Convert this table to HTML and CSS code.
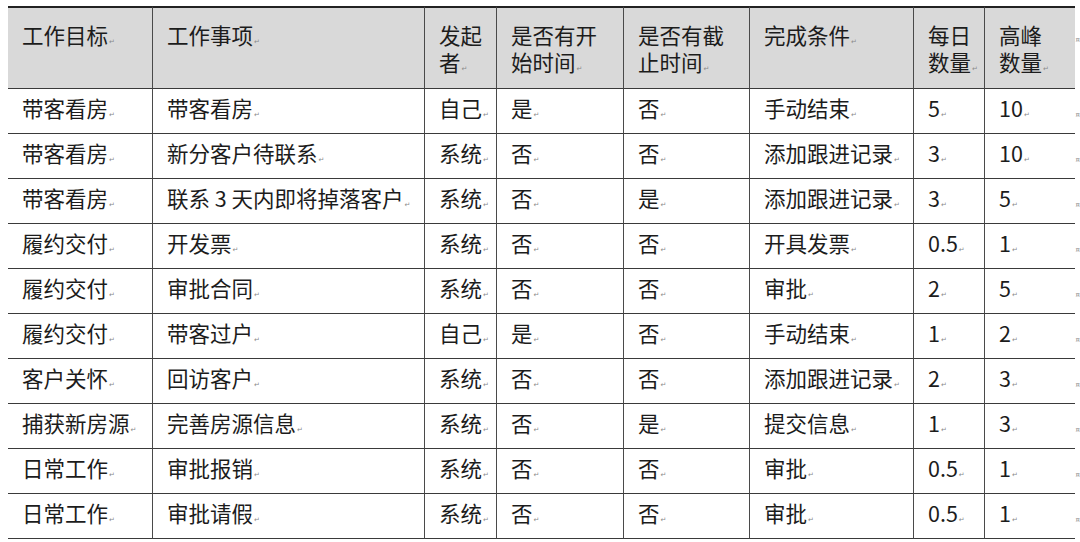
FILE: index.html
```html
<!DOCTYPE html>
<html lang="zh-CN">
<head>
<meta charset="utf-8">
<title>工作事项表</title>
<link rel="stylesheet" href="styles.css">
</head>
<body>
<table class="tbl">
  <colgroup>
    <col class="c1"><col class="c2"><col class="c3"><col class="c4"><col class="c5"><col class="c6"><col class="c7"><col class="c8"><col class="cend">
  </colgroup>
  <thead>
    <tr>
      <th>工作目标<span class="pm">↵</span></th>
      <th>工作事项<span class="pm">↵</span></th>
      <th>发起<br>者<span class="pm">↵</span></th>
      <th>是否有开<br>始时间<span class="pm">↵</span></th>
      <th>是否有截<br>止时间<span class="pm">↵</span></th>
      <th>完成条件<span class="pm">↵</span></th>
      <th>每日<br>数量<span class="pm">↵</span></th>
      <th>高峰<br>数量<span class="pm">↵</span></th>
      <th class="end"><span class="rm">¤</span></th>
    </tr>
  </thead>
  <tbody>
    <tr><td>带客看房<span class="pm">↵</span></td><td>带客看房<span class="pm">↵</span></td><td>自己<span class="pm">↵</span></td><td>是<span class="pm">↵</span></td><td>否<span class="pm">↵</span></td><td>手动结束<span class="pm">↵</span></td><td>5<span class="pm">↵</span></td><td>10<span class="pm">↵</span></td><td class="end"><span class="rm">¤</span></td></tr>
    <tr><td>带客看房<span class="pm">↵</span></td><td>新分客户待联系<span class="pm">↵</span></td><td>系统<span class="pm">↵</span></td><td>否<span class="pm">↵</span></td><td>否<span class="pm">↵</span></td><td>添加跟进记录<span class="pm">↵</span></td><td>3<span class="pm">↵</span></td><td>10<span class="pm">↵</span></td><td class="end"><span class="rm">¤</span></td></tr>
    <tr><td>带客看房<span class="pm">↵</span></td><td>联系 3 天内即将掉落客户<span class="pm">↵</span></td><td>系统<span class="pm">↵</span></td><td>否<span class="pm">↵</span></td><td>是<span class="pm">↵</span></td><td>添加跟进记录<span class="pm">↵</span></td><td>3<span class="pm">↵</span></td><td>5<span class="pm">↵</span></td><td class="end"><span class="rm">¤</span></td></tr>
    <tr><td>履约交付<span class="pm">↵</span></td><td>开发票<span class="pm">↵</span></td><td>系统<span class="pm">↵</span></td><td>否<span class="pm">↵</span></td><td>否<span class="pm">↵</span></td><td>开具发票<span class="pm">↵</span></td><td>0.5<span class="pm">↵</span></td><td>1<span class="pm">↵</span></td><td class="end"><span class="rm">¤</span></td></tr>
    <tr><td>履约交付<span class="pm">↵</span></td><td>审批合同<span class="pm">↵</span></td><td>系统<span class="pm">↵</span></td><td>否<span class="pm">↵</span></td><td>否<span class="pm">↵</span></td><td>审批<span class="pm">↵</span></td><td>2<span class="pm">↵</span></td><td>5<span class="pm">↵</span></td><td class="end"><span class="rm">¤</span></td></tr>
    <tr><td>履约交付<span class="pm">↵</span></td><td>带客过户<span class="pm">↵</span></td><td>自己<span class="pm">↵</span></td><td>是<span class="pm">↵</span></td><td>否<span class="pm">↵</span></td><td>手动结束<span class="pm">↵</span></td><td>1<span class="pm">↵</span></td><td>2<span class="pm">↵</span></td><td class="end"><span class="rm">¤</span></td></tr>
    <tr><td>客户关怀<span class="pm">↵</span></td><td>回访客户<span class="pm">↵</span></td><td>系统<span class="pm">↵</span></td><td>否<span class="pm">↵</span></td><td>否<span class="pm">↵</span></td><td>添加跟进记录<span class="pm">↵</span></td><td>2<span class="pm">↵</span></td><td>3<span class="pm">↵</span></td><td class="end"><span class="rm">¤</span></td></tr>
    <tr><td>捕获新房源<span class="pm">↵</span></td><td>完善房源信息<span class="pm">↵</span></td><td>系统<span class="pm">↵</span></td><td>否<span class="pm">↵</span></td><td>是<span class="pm">↵</span></td><td>提交信息<span class="pm">↵</span></td><td>1<span class="pm">↵</span></td><td>3<span class="pm">↵</span></td><td class="end"><span class="rm">¤</span></td></tr>
    <tr><td>日常工作<span class="pm">↵</span></td><td>审批报销<span class="pm">↵</span></td><td>系统<span class="pm">↵</span></td><td>否<span class="pm">↵</span></td><td>否<span class="pm">↵</span></td><td>审批<span class="pm">↵</span></td><td>0.5<span class="pm">↵</span></td><td>1<span class="pm">↵</span></td><td class="end"><span class="rm">¤</span></td></tr>
    <tr><td>日常工作<span class="pm">↵</span></td><td>审批请假<span class="pm">↵</span></td><td>系统<span class="pm">↵</span></td><td>否<span class="pm">↵</span></td><td>否<span class="pm">↵</span></td><td>审批<span class="pm">↵</span></td><td>0.5<span class="pm">↵</span></td><td>1<span class="pm">↵</span></td><td class="end"><span class="rm">¤</span></td></tr>
  </tbody>
</table>
</body>
</html>
```

FILE: styles.css
```css
* { box-sizing: border-box; }
html, body { background: #ffffff; }
body {
  margin: 0;
  padding: 6px 0 0 8px;
  font-family: "Noto Sans CJK SC", "Noto Sans", sans-serif;
  color: #1c1c1c;
}
.tbl {
  border-collapse: separate;
  border-spacing: 0;
  table-layout: fixed;
  width: 1072px;
  font-size: 21.5px;
}
.c1 { width: 144px; }
.c2 { width: 272px; }
.c3 { width: 72px; }
.c4 { width: 127px; }
.c5 { width: 126px; }
.c6 { width: 164px; }
.c7 { width: 71px; }
.c8 { width: 91px; }
.cend { width: 5px; }

.tbl th, .tbl td {
  text-align: left;
  font-weight: 400;
  padding: 0 0 0 14px;
  border-bottom: 1px solid #3a3a3a;
  border-left: 1px solid #4a4a4a;
  white-space: nowrap;
}
.tbl th:first-child, .tbl td:first-child { border-left: none; }
.tbl th {
  background: #d9d9d9;
  border-top: 2px solid #222222;
  height: 83px;
  vertical-align: top;
  padding-top: 13px;
  line-height: 27px;
}
.tbl td {
  height: 45px;
  vertical-align: middle;
  line-height: 27px;
}
.tbl th.end, .tbl td.end {
  background: transparent;
  border: none;
  padding: 0;
  text-align: right;
}
.tbl th.end { padding-top: 13px; }
.pm {
  font-family: "DejaVu Sans", sans-serif;
  font-size: 7px;
  color: #8a8a8a;
  margin-left: 1px;
  vertical-align: baseline;
}
.rm {
  font-family: "DejaVu Sans", sans-serif;
  font-size: 7px;
  color: #8a8a8a;
}
```
